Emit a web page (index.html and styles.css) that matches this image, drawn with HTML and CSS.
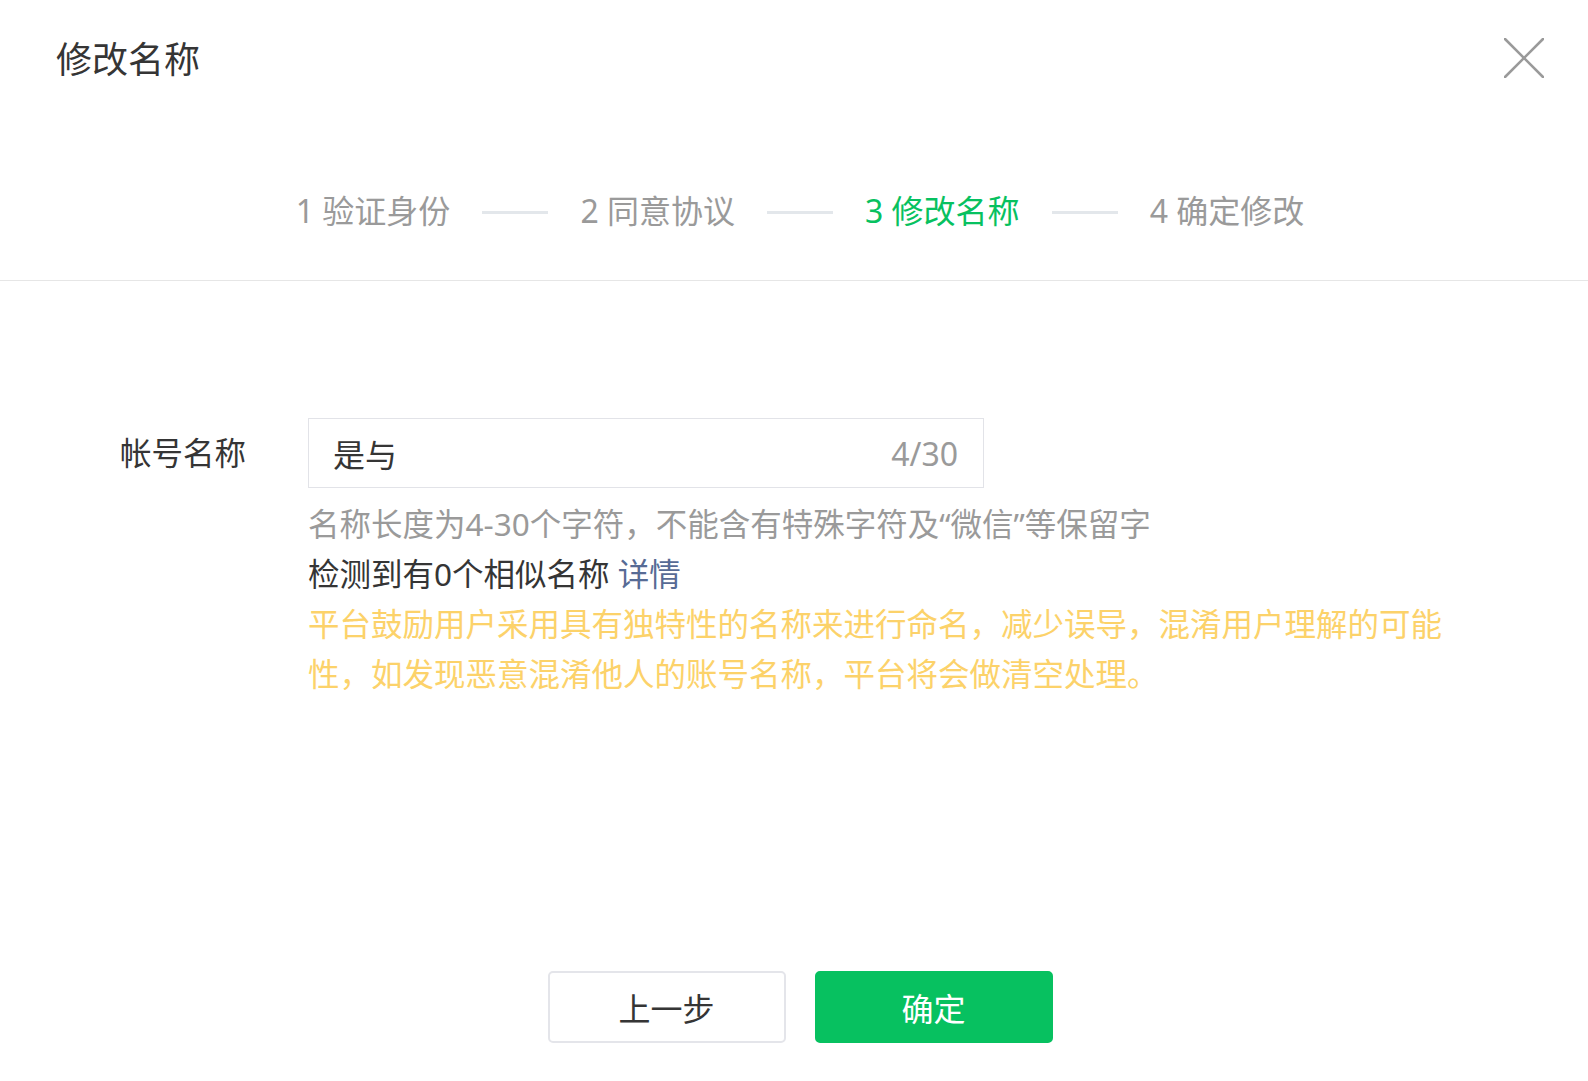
FILE: index.html
```html
<!DOCTYPE html>
<html lang="zh-CN">

<head>
    <meta charset="UTF-8">
    <meta name="viewport" content="width=device-width, initial-scale=1.0">
    <title>修改名称</title>
    <link rel="stylesheet" href="styles.css">
</head>

<body>

    <div class="dialog">
        <!-- 标题栏 -->
        <div class="dialog-head">
            <h2>修改名称</h2>
            <a class="close" href="#" title="关闭">
                <svg width="40" height="40" viewBox="0 0 40 40">
                    <line x1="1" y1="1" x2="39" y2="39" stroke="#9a9a9a" stroke-width="2.6" stroke-linecap="round" />
                    <line x1="39" y1="1" x2="1" y2="39" stroke="#9a9a9a" stroke-width="2.6" stroke-linecap="round" />
                </svg>
            </a>
        </div>

        <!-- 步骤条 -->
        <div class="steps">
            <span class="step">1 验证身份</span>
            <span class="step-line"></span>
            <span class="step">2 同意协议</span>
            <span class="step-line"></span>
            <span class="step active">3 修改名称</span>
            <span class="step-line"></span>
            <span class="step">4 确定修改</span>
        </div>

        <div class="form">
            <div class="form-row">
                <label for="nickname">帐号名称</label>
                <div class="form-field">
                    <div class="name-box">
                        <input type="text" id="nickname" value="是与" maxlength="30">
                        <span class="counter">4/30</span>
                    </div>
                    <p class="tips">名称长度为4-30个字符，不能含有特殊字符及“微信”等保留字</p>
                    <p class="check">检测到有0个相似名称 <a href="#">详情</a></p>
                    <p class="warn">平台鼓励用户采用具有独特性的名称来进行命名，减少误导，混淆用户理解的可能性，如发现恶意混淆他人的账号名称，平台将会做清空处理。</p>
                </div>
            </div>
        </div>

        <div class="dialog-foot">
            <button type="button" class="btn">上一步</button>
            <button type="button" class="btn btn-primary">确定</button>
        </div>
    </div>

</body>

</html>
```

FILE: styles.css
```css
body {
    margin: 0;
    font-family: "Noto Sans", "Noto Sans CJK SC", sans-serif;
    color: #353535;
    background: #fff;
}
.dialog {
    width: 1588px;
}

/* 标题栏 */
.dialog-head {
    height: 120px;
    display: flex;
    align-items: center;
    justify-content: space-between;
    padding: 0 44px 0 56px;
}
.dialog-head h2 {
    margin: 0;
    font-size: 36px;
    font-weight: normal;
    line-height: 50px;
}
.close {
    display: block;
    width: 40px;
    height: 40px;
    margin-bottom: 4px;
}

/* 步骤条 */
.steps {
    display: flex;
    align-items: center;
    justify-content: center;
    gap: 32px;
    padding: 66px 0 44px 12px;
    border-bottom: 1px solid #e6e6e6;
}
.step {
    font-size: 32px;
    line-height: 50px;
    color: #9a9a9a;
    white-space: nowrap;
}
.step.active {
    color: #07c160;
}
.step-line {
    width: 66px;
    height: 3px;
    background: #e3e7eb;
    margin-top: 2px;
}

/* 表单 */
.form {
    padding: 137px 0 0 120px;
}
.form-row {
    display: flex;
}
.form-row label {
    width: 188px;
    font-size: 31.5px;
    line-height: 70px;
}
.name-box {
    width: 676px;
    height: 70px;
    box-sizing: border-box;
    border: 1px solid #e2e3e8;
    display: flex;
    align-items: center;
    padding: 0 25px 0 24px;
}
.name-box input {
    flex: 1;
    border: none;
    outline: none;
    padding: 0;
    font-family: inherit;
    font-size: 32px;
    color: #353535;
    background: transparent;
}
.counter {
    font-size: 32px;
    color: #9a9a9a;
}
.form-field p {
    margin: 0;
    font-size: 31.5px;
    line-height: 50px;
}
.tips {
    color: #9a9a9a;
    margin-top: 11px !important;
}
.check a {
    color: #576b95;
    text-decoration: none;
}
.warn {
    width: 1150px;
    color: #fcd26a;
}

/* 底部按钮 */
.dialog-foot {
    display: flex;
    justify-content: center;
    gap: 29px;
    margin-top: 272px;
    padding-left: 12px;
}
.btn {
    width: 238px;
    height: 72px;
    border: 2px solid #e4e5ea;
    border-radius: 5px;
    background: #fff;
    font-family: inherit;
    font-size: 32px;
    color: #353535;
}
.btn-primary {
    background: #07c160;
    border-color: #07c160;
    color: #fff;
}
```
